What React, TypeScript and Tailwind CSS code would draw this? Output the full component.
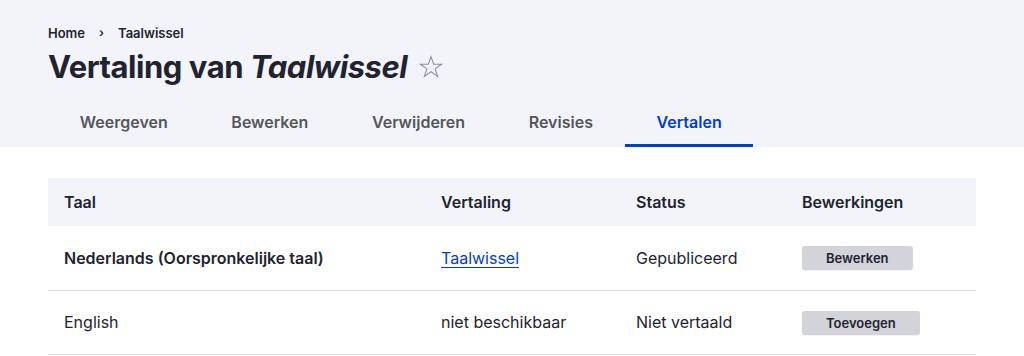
import React from "react";

const tabs = [
  { label: "Weergeven", active: false },
  { label: "Bewerken", active: false },
  { label: "Verwijderen", active: false },
  { label: "Revisies", active: false },
  { label: "Vertalen", active: true },
];

function StarIcon() {
  return (
    <svg width="26" height="26" viewBox="0 0 24 24" fill="none" stroke="#8e929c" strokeWidth="1" strokeLinejoin="miter">
      <path d="M12 2.5l2.47 6.9h7.28l-5.9 4.3 2.26 7-6.11-4.37-6.11 4.37 2.26-7-5.9-4.3h7.28z" />
    </svg>
  );
}

export default function App() {
  return (
    <div className="min-h-[356px] bg-white text-[#222330] font-['Inter',sans-serif]">
      {/* Page header */}
      <div className="bg-[#f3f4f9] px-12 pt-[25px]">
        <nav className="flex items-center text-[13px] font-semibold leading-4">
          <span>Home</span>
          <span className="mx-[14px] text-[12px]">›</span>
          <span>Taalwissel</span>
        </nav>
        <h1 className="mt-[6px] flex items-center text-[31px] font-bold leading-[40px] tracking-[-0.015em]">
          <span>
            Vertaling van <em>Taalwissel</em>
          </span>
          <span className="ml-[11px] flex items-center">
            <StarIcon />
          </span>
        </h1>
        <div className="mt-[20px] flex">
          {tabs.map((t) => (
            <div
              key={t.label}
              className={
                t.active
                  ? "border-b-[3px] border-[#003ecc] px-[31.8px] pb-[10px] pt-[3px] text-[16px] font-semibold leading-6 text-[#003ecc]"
                  : "border-b-[3px] border-transparent px-[31.8px] pb-[10px] pt-[3px] text-[16px] font-semibold leading-6 text-[#55565b]"
              }
            >
              {t.label}
            </div>
          ))}
        </div>
      </div>

      {/* Translations table */}
      <div className="px-12 pt-[31px]">
        <table className="w-full table-fixed border-collapse text-[16px] leading-6">
          <colgroup>
            <col className="w-[377px]" />
            <col className="w-[195px]" />
            <col className="w-[166px]" />
            <col />
          </colgroup>
          <thead>
            <tr className="bg-[#f3f4f9] text-left">
              <th className="h-12 px-4 font-semibold">Taal</th>
              <th className="h-12 px-4 font-semibold">Vertaling</th>
              <th className="h-12 px-4 font-semibold">Status</th>
              <th className="h-12 px-4 font-semibold">Bewerkingen</th>
            </tr>
          </thead>
          <tbody>
            <tr className="border-b border-[#dcdde2]">
              <td className="h-16 px-4 font-semibold">Nederlands (Oorspronkelijke taal)</td>
              <td className="h-16 px-4">
                <a href="#" className="text-[#003ecc] underline underline-offset-[3px]">
                  Taalwissel
                </a>
              </td>
              <td className="h-16 px-4">Gepubliceerd</td>
              <td className="h-16 px-4">
                <button className="h-6 rounded-[3px] bg-[#d3d4d9] px-[24px] text-[13px] font-semibold leading-6 text-[#222330] shadow-[0_1px_1px_rgba(0,0,0,0.05)]">
                  Bewerken
                </button>
              </td>
            </tr>
            <tr className="border-b border-[#dcdde2]">
              <td className="h-16 px-4">English</td>
              <td className="h-16 px-4">niet beschikbaar</td>
              <td className="h-16 px-4">Niet vertaald</td>
              <td className="h-16 px-4">
                <button className="h-6 rounded-[3px] bg-[#d3d4d9] px-[24px] text-[13px] font-semibold leading-6 text-[#222330] shadow-[0_1px_1px_rgba(0,0,0,0.05)]">
                  Toevoegen
                </button>
              </td>
            </tr>
          </tbody>
        </table>
      </div>
    </div>
  );
}
